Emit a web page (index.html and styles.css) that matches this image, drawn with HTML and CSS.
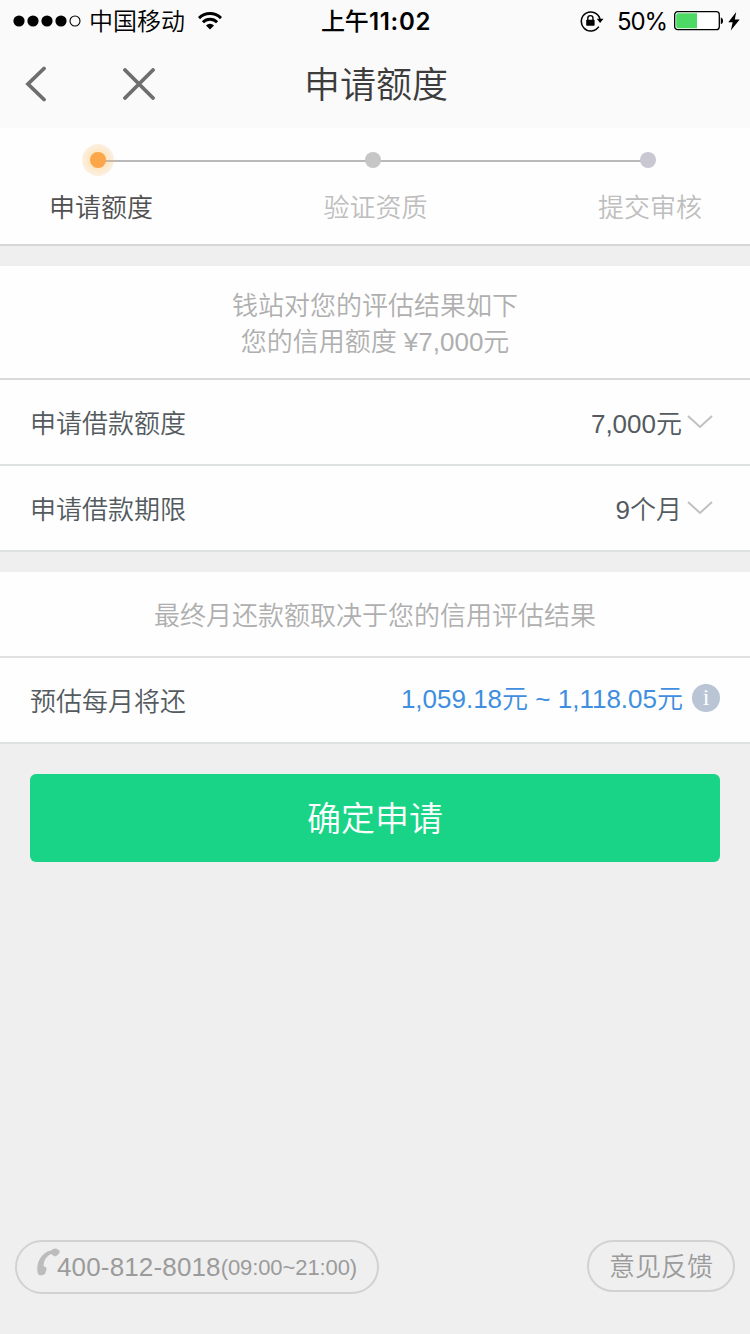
FILE: index.html
```html
<!DOCTYPE html>
<html lang="zh-CN">
<head>
<meta charset="utf-8">
<title>申请额度</title>
<link rel="stylesheet" href="styles.css">
</head>
<body>
<div class="screen">
  <header class="top">
    <div class="status">
      <div class="status-left">
        <svg class="signal" width="68" height="12" viewBox="0 0 68 12"><g fill="#000"><circle cx="6" cy="6" r="5.6"/><circle cx="20" cy="6" r="5.6"/><circle cx="34" cy="6" r="5.6"/><circle cx="48" cy="6" r="5.6"/></g><circle cx="62" cy="6" r="5" fill="none" stroke="#000" stroke-width="1.1"/></svg>
        <span class="carrier">中国移动</span>
        <svg class="wifi" width="24" height="18" viewBox="0 0 24 18"><g fill="none" stroke="#000" stroke-width="2.9"><path d="M1 6.1a15.6 15.6 0 0 1 22 0"/><path d="M4.9 10.2a10 10 0 0 1 14.2 0"/></g><path d="M8 13.5a5.7 5.7 0 0 1 8 0L12 17.6z"/></svg>
      </div>
      <span class="time">上午<b class="clock">11:02</b></span>
      <div class="status-right">
        <svg class="lock" width="24" height="22" viewBox="0 0 24 22"><path d="M18.8 16.6A9.5 9.5 0 1 1 20 9" fill="none" stroke="#000" stroke-width="1.5"/><path d="M16.8 8.7h6.7l-3.4 4.2z"/><rect x="6.2" y="9.8" width="8.4" height="6" rx=".7"/><path d="M7.8 10V8.200a2.600 2.600 0 0 1 5.200 0V10" fill="none" stroke="#000" stroke-width="1.400"/></svg>
        <span class="percent">50%</span>
        <svg class="battery" width="50" height="20" viewBox="0 0 50 20"><rect x=".7" y=".7" width="44.600" height="18" rx="3" fill="#fff" stroke="#000" stroke-width="1.3"/><path d="M4 2.200h19v15H4a1.800 1.800 0 0 1-1.800-1.800V4A1.800 1.800 0 0 1 4 2.200z" fill="#4cd964"/><path d="M46.800 6.400c3 .6 3 6 0 6.600z"/></svg>
        <svg class="bolt" width="12" height="19" viewBox="0 0 12 19"><path d="M8.200 0 .3 10.300h4.400L2.800 18.500 11.700 7.600H6.800z"/></svg>
      </div>
    </div>
    <nav class="nav">
      <svg class="back" width="22" height="36" viewBox="0 0 22 36"><path d="M19 2.500 3 18l16 15.500" fill="none" stroke="#6e6e6e" stroke-width="3.800" stroke-linecap="round"/></svg>
      <svg class="close" width="32" height="32" viewBox="0 0 32 32"><path d="M2 2l28 28M30 2 2 30" fill="none" stroke="#6e6e6e" stroke-width="3.800" stroke-linecap="round"/></svg>
      <h1 class="title">申请额度</h1>
    </nav>
  </header>

  <section class="steps">
    <svg class="track" width="750" height="36" viewBox="0 0 750 36">
      <defs><radialGradient id="glow"><stop offset=".5" stop-color="#fde6c0"/><stop offset="1" stop-color="#fbf0e2"/></radialGradient></defs>
      <rect x="98" y="18" width="550" height="2" fill="#b9b9bc"/>
      <circle cx="98" cy="18" r="16" fill="url(#glow)"/>
      <rect x="104" y="18" width="11" height="2" fill="#c9b9a4"/>
      <circle cx="98" cy="18" r="8" fill="#fca549"/>
      <circle cx="373" cy="18" r="8" fill="#c6c6c6"/>
      <circle cx="648" cy="18" r="8" fill="#c8c7d2"/>
    </svg>
    <div class="step-labels">
      <span class="step current">申请额度</span>
      <span class="step">验证资质</span>
      <span class="step">提交审核</span>
    </div>
  </section>

  <section class="card">
    <p class="notice result">钱站对您的评估结果如下<br>您的信用额度 ¥7,000元</p>
    <div class="row">
      <span class="label">申请借款额度</span>
      <span class="value">7,000元</span>
      <svg class="chevron" width="26" height="14" viewBox="0 0 26 14"><path d="M1 1l12 11L25 1" fill="none" stroke="#c0c0c0" stroke-width="2"/></svg>
    </div>
    <div class="row">
      <span class="label">申请借款期限</span>
      <span class="value">9个月</span>
      <svg class="chevron" width="26" height="14" viewBox="0 0 26 14"><path d="M1 1l12 11L25 1" fill="none" stroke="#c0c0c0" stroke-width="2"/></svg>
    </div>
  </section>

  <section class="card">
    <p class="notice">最终月还款额取决于您的信用评估结果</p>
    <div class="row estimate">
      <span class="label">预估每月将还</span>
      <span class="value amount">1,059.18元 ~ 1,118.05元</span>
      <span class="info">i</span>
    </div>
  </section>

  <button class="submit">确定申请</button>

  <footer class="footer">
    <div class="pill phone">
      <svg class="handset" width="25" height="28" viewBox="0 0 26 30"><path d="M2 28.200C-1.800 18 5 4.800 15.500 2.800L18 1.200c1.500-1 3.500-.9 4.700.1l1.500 1.200c1.200 1 .9 2.600-.2 3.700l-2.300 2c-1.200 1-3 .8-4.100-.4l-1.500-1.500C10.600 8.500 7.700 13.500 7.800 19.500l1.400.5c1.500.5 1.900 1.800 1.500 3.200l-1 3.500c-.9 2.600-6.500 3.500-7.700 1.500z" fill="#bcbcbc"/></svg>
      <span class="number">400-812-8018</span><span class="hours">(09:00~21:00)</span>
    </div>
    <div class="pill feedback">意见反馈</div>
  </footer>
</div>
</body>
</html>
```
FILE: styles.css
```css
* { box-sizing: border-box; }
body {
  margin: 0;
  font-family: "Liberation Sans", "Noto Sans CJK SC", sans-serif;
  font-size: 26px;
  font-weight: 350;
  color: #535b60;
}
svg { display: block; flex: none; }
.screen {
  width: 750px;
  height: 1334px;
  display: flex;
  flex-direction: column;
  background: #efefef;
  overflow: hidden;
}
.top { height: 128px; background: #fafafa; }
.status {
  height: 40px;
  padding: 0 10px 0 12px;
  display: grid;
  grid-template-columns: 1fr auto 1fr;
  align-items: center;
  font-family: Inter, "Noto Sans CJK SC", sans-serif;
  font-size: 24px;
  line-height: 40px;
  color: #000;
}
.status-left, .status-right { display: flex; align-items: center; }
.status-right { justify-content: flex-end; }
.signal { margin-left: 1px; }
.carrier { margin-left: 8px; padding-top: 2px; font-weight: 350; }
.wifi { margin-left: 13px; }
.time { padding-top: 2px; font-weight: 500; font-size: 24px; }
.clock { font-weight: 600; letter-spacing: 0.7px; }
.percent { margin: 0 7px 0 13px; padding-top: 2px; font-weight: 400; letter-spacing: -1.1px; }
.bolt { margin-left: 4px; }
.nav {
  height: 88px;
  padding: 0 25px;
  display: grid;
  grid-template-columns: 98px 181px 1fr;
  align-items: center;
}
.title {
  margin: 0;
  padding-top: 4px;
  font-size: 36px;
  line-height: 84px;
  font-weight: 350;
  color: #3c3c3c;
}
.steps {
  height: 118px;
  padding-top: 14px;
  background: #fefefe;
  border-bottom: 2px solid #d6d6d6;
}
.step-labels {
  display: flex;
  justify-content: space-between;
  padding: 11px 48px 0 49px;
  line-height: 38px;
}
.step { color: #bebebe; }
.current { color: #505050; }
.card { margin-top: 20px; background: #fefefe; }
.notice {
  margin: 0;
  height: 86px;
  padding-top: 2px;
  line-height: 84px;
  text-align: center;
  color: #afafaf;
  border-bottom: 2px solid #e0e2e2;
}
.result {
  height: 114px;
  padding-top: 22px;
  line-height: 36px;
  border-color: #d9d9d9;
}
.row {
  height: 86px;
  padding: 0 37px 0 30px;
  display: flex;
  align-items: center;
  line-height: 80px;
  border-bottom: 2px solid #dfe2e2;
}
.label { flex: 1; padding-top: 4px; }
.value { padding-top: 3px; }
.chevron { margin-left: 5px; }
.estimate { padding-right: 30px; }
.amount { padding: 0 0 2px; color: #3f8ee0; }
.info {
  width: 28px;
  height: 28px;
  margin: 0 0 4px 9px;
  border-radius: 50%;
  background: #b9c5d5;
  color: #fff;
  font: 400 24px/27px "Liberation Serif", serif;
  text-align: center;
}
.submit {
  height: 88px;
  margin: 30px 30px 0;
  padding: 0 0 2px;
  border: 0;
  border-radius: 6px;
  background: #19d486;
  color: #fff;
  font: 350 34px/86px "Noto Sans CJK SC", sans-serif;
}
.footer {
  margin-top: auto;
  padding: 0 15px 40px;
  display: flex;
  justify-content: space-between;
  align-items: flex-start;
  color: #9b9b9b;
}
.pill {
  border: 2px solid #d2d2d2;
  border-radius: 27px;
  display: flex;
}
.phone {
  width: 364px;
  height: 54px;
  padding-left: 18px;
  line-height: 50px;
}
.handset { margin: 6px -4px 0 1px; }
.number { letter-spacing: 0.15px; }
.hours { padding-top: 1px; font-size: 22px; letter-spacing: -0.1px; }
.feedback {
  width: 148px;
  height: 52px;
  padding-top: 1px;
  justify-content: center;
  line-height: 48px;
}
```
